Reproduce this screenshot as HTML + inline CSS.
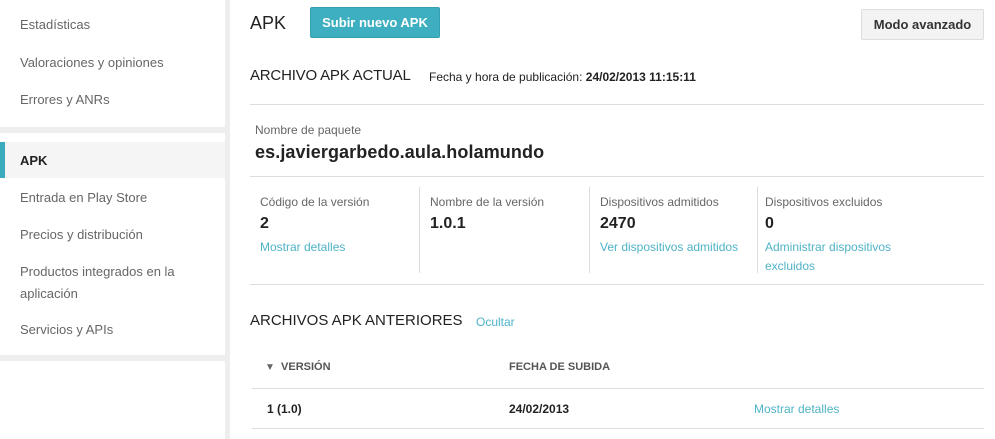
<!DOCTYPE html>
<html><head><meta charset="utf-8"><style>
*{margin:0;padding:0;box-sizing:border-box}
body{width:995px;height:439px;overflow:hidden;background:#fff;font-family:"Liberation Sans",Arial,sans-serif;position:relative;color:#222}
.a{position:absolute;white-space:nowrap}
.side{position:absolute;left:0;top:0;width:225px;height:439px;background:#fff}
.gap{position:absolute;left:225px;top:0;width:5px;height:439px;background:#eee}
.band{position:absolute;left:0;width:225px;height:6px;background:#eee}
.nav{position:absolute;left:20px;font-size:13px;color:#666}
.hr{position:absolute;height:1px;background:#ddd}
.lbl{font-size:12px;color:#666}
.big{font-size:16px;font-weight:bold;color:#222}
.lnk{font-size:12px;color:#4fb3c7}
.vl{position:absolute;width:1px;background:#ddd;top:187px;height:86px}
</style></head><body>
<div class="side"></div>
<div class="gap"></div>
<div class="band" style="top:127px"></div>
<div class="band" style="top:355px"></div>
<div class="nav" style="top:17px">Estadísticas</div>
<div class="nav" style="top:55px">Valoraciones y opiniones</div>
<div class="nav" style="top:92px">Errores y ANRs</div>
<div style="position:absolute;left:0;top:142px;width:225px;height:36px;background:#f5f5f5"></div>
<div style="position:absolute;left:0;top:142px;width:5px;height:36px;background:#3aabbc"></div>
<div class="nav" style="top:153px;color:#222;font-weight:bold">APK</div>
<div class="nav" style="top:190px">Entrada en Play Store</div>
<div class="nav" style="top:227px">Precios y distribución</div>
<div class="nav" style="top:261px;line-height:22px;white-space:normal;width:190px">Productos integrados en la aplicación</div>
<div class="nav" style="top:322px">Servicios y APIs</div>

<div class="a" style="left:250px;top:13px;font-size:18px;color:#222">APK</div>
<div class="a" style="left:310px;top:7px;width:130px;height:31px;background:#3eafc0;border:1px solid #35a0b0;border-radius:2px;color:#fff;font-weight:bold;font-size:13px;text-align:center;line-height:29px">Subir nuevo APK</div>
<div class="a" style="left:861px;top:9px;width:123px;height:31px;background:#f3f3f3;border:1px solid #ddd;border-radius:2px;color:#333;font-weight:bold;font-size:13px;text-align:center;line-height:29px">Modo avanzado</div>

<div class="a" style="left:250px;top:67px;font-size:15px;color:#222;letter-spacing:-0.2px">ARCHIVO APK ACTUAL</div>
<div class="a" style="left:429px;top:70px;font-size:12px;color:#222">Fecha y hora de publicación: <b>24/02/2013 11:15:11</b></div>
<div class="hr" style="left:250px;top:104px;width:734px"></div>
<div class="a lbl" style="left:255px;top:123px">Nombre de paquete</div>
<div class="a" style="left:255px;top:142px;font-size:18px;font-weight:bold;color:#222;letter-spacing:0.1px">es.javiergarbedo.aula.holamundo</div>
<div class="hr" style="left:250px;top:176px;width:734px"></div>

<div class="a lbl" style="left:260px;top:195px">Código de la versión</div>
<div class="a big" style="left:260px;top:215px">2</div>
<div class="a lnk" style="left:260px;top:240px">Mostrar detalles</div>
<div class="vl" style="left:419px"></div>
<div class="a lbl" style="left:430px;top:195px">Nombre de la versión</div>
<div class="a big" style="left:430px;top:215px">1.0.1</div>
<div class="vl" style="left:589px"></div>
<div class="a lbl" style="left:600px;top:195px">Dispositivos admitidos</div>
<div class="a big" style="left:600px;top:215px">2470</div>
<div class="a lnk" style="left:600px;top:240px">Ver dispositivos admitidos</div>
<div class="vl" style="left:757px"></div>
<div class="a lbl" style="left:765px;top:195px">Dispositivos excluidos</div>
<div class="a big" style="left:765px;top:215px">0</div>
<div class="a lnk" style="left:765px;top:238px;line-height:19px">Administrar dispositivos<br>excluidos</div>
<div class="hr" style="left:250px;top:284px;width:734px"></div>

<div class="a" style="left:250px;top:312px;font-size:15px;color:#222">ARCHIVOS APK ANTERIORES</div>
<div class="a lnk" style="left:476px;top:315px">Ocultar</div>
<div class="a" style="left:265px;top:361px;font-size:11px;font-weight:bold;color:#555"><span style="color:#666;font-size:10px">▼</span>&nbsp; VERSIÓN</div>
<div class="a" style="left:509px;top:361px;font-size:11px;font-weight:bold;color:#555">FECHA DE SUBIDA</div>
<div class="hr" style="left:252px;top:388px;width:732px"></div>
<div class="a" style="left:267px;top:402px;font-size:12px;font-weight:bold;color:#222">1 (1.0)</div>
<div class="a" style="left:509px;top:402px;font-size:12px;font-weight:bold;color:#222">24/02/2013</div>
<div class="a lnk" style="left:754px;top:402px">Mostrar detalles</div>
<div class="hr" style="left:252px;top:428px;width:732px"></div>
</body></html>
